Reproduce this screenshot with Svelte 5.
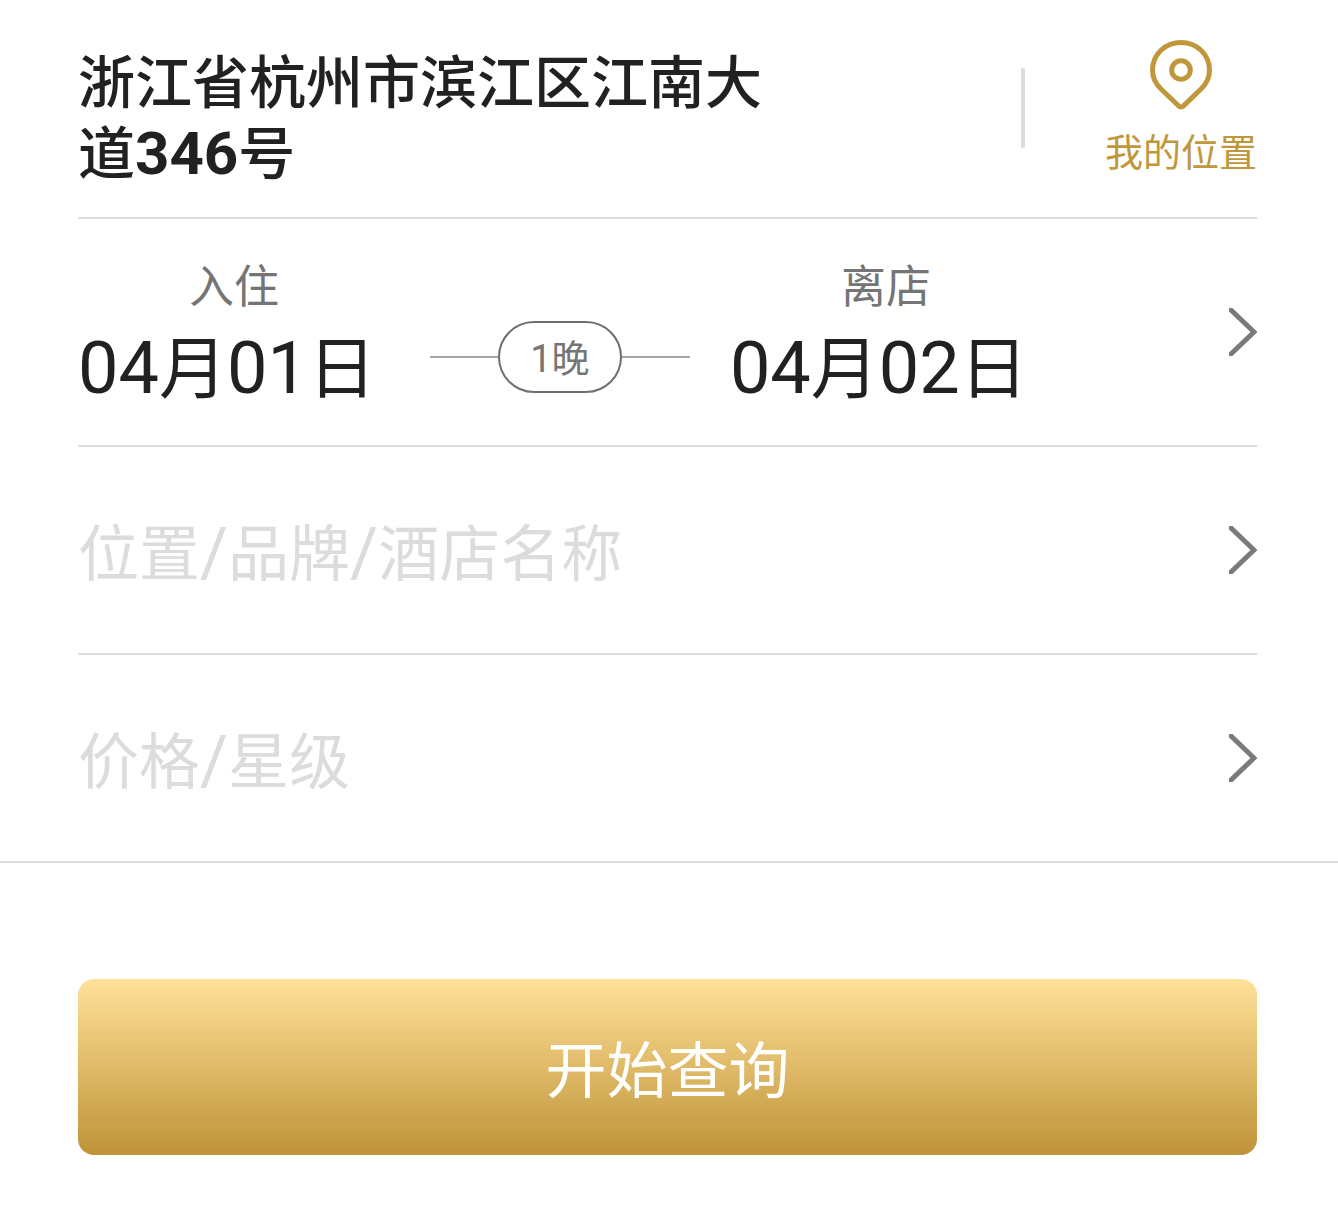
<script>
  const address = { area: '浙江省杭州市滨江区江南大', street: '道346号' };
  const nights = 1;
  const filters = ['位置/品牌/酒店名称', '价格/星级'];

  // Splits a string so that Latin runs can be set larger than the Chinese around them.
  const runs = (text) => text.split(/([\d/]+)/).filter(Boolean);
  const isLatin = (run) => /^[\d/]/.test(run);
</script>

{#snippet mixed(text)}
  {#each runs(text) as run}{#if isLatin(run)}<span class="latin">{run}</span>{:else}<span>{run}</span>{/if}{/each}
{/snippet}

{#snippet chevron()}
  <svg class="chevron" viewBox="0 0 28 48" aria-hidden="true">
    <path d="M2 2 L25 24 L2 46" />
  </svg>
{/snippet}

<main>
  <div class="fields">
    <section class="row address-row">
      <h1><span>{address.area}</span>{@render mixed(address.street)}</h1>
      <button class="locate" type="button">
        <svg viewBox="0 0 62 70" aria-hidden="true">
          <path d="M28.5 65.8 L10.5 48.5 C5 43 2.5 37 2.5 30 C2.5 14.5 15 2.5 31 2.5 C47 2.5 59.5 14.5 59.5 30 C59.5 37 57 43 51.5 48.5 L33.5 65.8 Q31 68 28.5 65.8 Z" />
          <circle cx="31" cy="30" r="9.3" />
        </svg>
        <span>我的位置</span>
      </button>
    </section>

    <button class="row dates" type="button">
      <span class="stay">
        <span class="day"><span class="label">入住</span><span class="date">{@render mixed('04月01日')}</span></span>
        <span class="nights"><span>{nights}晚</span></span>
        <span class="day"><span class="label">离店</span><span class="date">{@render mixed('04月02日')}</span></span>
      </span>
      {@render chevron()}
    </button>

    {#each filters as filter}
      <button class="row filter" type="button">
        <span class="hint">{@render mixed(filter)}</span>
        {@render chevron()}
      </button>
    {/each}
  </div>

  <div class="actions">
    <button class="search" type="button">开始查询</button>
  </div>
</main>

<style>
  :global(body) {
    margin: 0;
    background: #fff;
  }
  main {
    font-family: Roboto, 'Noto Sans CJK SC', sans-serif;
    color: #212121;
  }
  button {
    margin: 0;
    padding: 0;
    border: 0;
    background: none;
    color: inherit;
    font: inherit;
    text-align: left;
    cursor: pointer;
  }
  .latin {
    line-height: 1;
  }
  .fields {
    padding: 0 81px 0 78px;
    border-bottom: 2px solid #dcdcdc;
  }
  .row {
    display: flex;
    align-items: center;
    justify-content: space-between;
    box-sizing: content-box;
    width: 100%;
    border-bottom: 2px solid #dcdcdc;
  }
  .row:last-child {
    border-bottom: 0;
  }
  .address-row {
    align-items: flex-start;
    padding: 40px 0 27px;
  }
  h1 {
    margin: 0;
    padding-top: 8px;
    max-width: 700px;
    font-size: 57px;
    line-height: 71px;
    font-weight: 500;
  }
  h1 .latin {
    font-size: 60px;
    font-weight: 700;
  }
  .locate {
    display: flex;
    flex-direction: column;
    align-items: center;
    gap: 18px;
    padding-left: 84px;
    background: linear-gradient(#dcdcdc, #dcdcdc) 0 28px / 4px 80px no-repeat;
    color: #c1973b;
    font-size: 38px;
    line-height: 50px;
  }
  .locate svg {
    width: 62px;
    height: 70px;
    fill: none;
    stroke: currentColor;
    stroke-width: 5;
  }
  .stay {
    display: flex;
    align-items: flex-end;
    padding: 38px 0 24px;
  }
  .day {
    display: flex;
    flex-direction: column;
  }
  .label {
    padding-left: 111px;
    color: #757575;
    font-size: 45px;
    line-height: 62px;
  }
  .date {
    font-size: 68px;
    line-height: 102px;
  }
  .date .latin {
    font-size: 72px;
  }
  .nights {
    display: flex;
    align-items: center;
    height: 128px;
    margin: 0 40px 0 54px;
    color: #757575;
    font-size: 38px;
  }
  .nights::before,
  .nights::after {
    content: '';
    width: 68px;
    height: 2px;
    background: #a6a6a6;
  }
  .nights span {
    min-width: 120px;
    padding-top: 4px;
    border: 2px solid #6e6e6e;
    border-radius: 36px;
    line-height: 64px;
    text-align: center;
  }
  .filter {
    height: 206px;
    color: #dcdcdc;
    font-size: 61px;
  }
  .hint {
    padding-top: 10px;
    line-height: 80px;
  }
  .hint .latin {
    font-size: 68px;
  }
  .chevron {
    flex: none;
    width: 28px;
    height: 48px;
    fill: none;
    stroke: #7a7a7a;
    stroke-width: 5;
    stroke-linecap: round;
  }
  .actions {
    padding: 116px 81px 71px 78px;
  }
  .search {
    width: 100%;
    padding: 10px 0 0;
    border-radius: 16px;
    background: linear-gradient(#ffe199, #bf9338);
    color: #fff;
    font-size: 61px;
    line-height: 166px;
    text-align: center;
  }
</style>
